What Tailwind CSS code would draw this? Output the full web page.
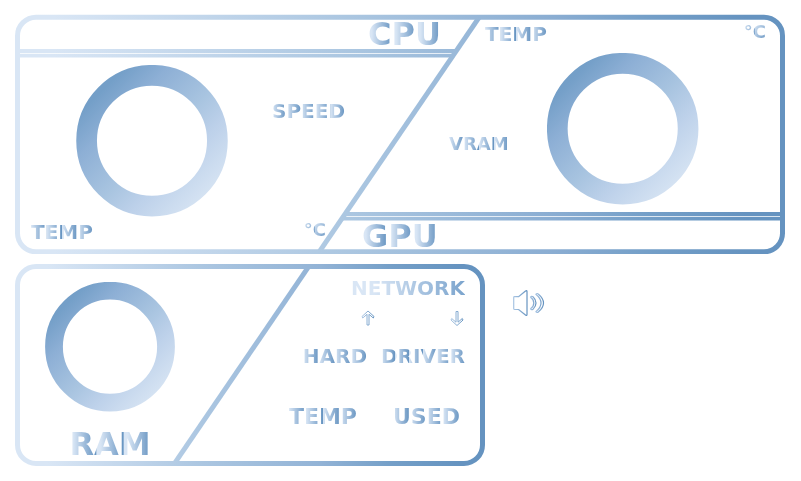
<!DOCTYPE html>
<html lang="en">
<head>
<meta charset="utf-8">
<meta name="viewport" content="width=device-width, initial-scale=1">
<title>System monitor</title>
<script src="https://cdn.jsdelivr.net/npm/@tailwindcss/browser@4"></script>
</head>
<body class="min-h-screen bg-white px-[15px] pt-[14px] font-['DejaVu_Sans',sans-serif] font-bold leading-none">
<svg class="absolute size-0" aria-hidden="true">
  <defs>
    <linearGradient id="ring" x1="0.02" y1="0.02" x2="0.98" y2="0.98">
      <stop offset="0" stop-color="#749fc8"/><stop offset=".1" stop-color="#749fc8"/><stop offset=".27" stop-color="#8dafd5"/><stop offset=".53" stop-color="#a8c4e0"/><stop offset=".7" stop-color="#bdd1ea"/><stop offset="1" stop-color="#dce8f5"/>
    </linearGradient>
    <linearGradient id="ink" x1="0" y1="0" x2="1" y2="0">
      <stop offset="0" stop-color="#a9c5e3"/><stop offset="1" stop-color="#6593c0"/>
    </linearGradient>
  </defs>
</svg>
<main class="flex flex-col gap-[10px]">
  <section class="grid max-w-[770px]" aria-label="CPU and GPU">
    <svg class="[grid-area:1/1] h-full w-full" viewBox="0 0 770 240" preserveAspectRatio="none" fill="none" stroke="url(#frameA)" aria-hidden="true">
      <defs><linearGradient id="frameA" gradientUnits="userSpaceOnUse" x1="0" y1="0" x2="770" y2="0"><stop offset=".05" stop-color="#d9e6f5"/><stop offset=".45" stop-color="#a9c5e0"/><stop offset=".7" stop-color="#8aadd2"/><stop offset=".82" stop-color="#749fc8"/><stop offset=".95" stop-color="#6593c0"/></linearGradient></defs>
      <rect x="2.5" y="3.2" width="765" height="234.6" rx="18.5" stroke-width="5"/>
      <path fill="url(#frameA)" stroke="none" d="M5 35H442L439.500 39.200H5ZM5 39.900H439L436.500 43.500H5ZM331 198H766V202.200H328.500ZM327.500 202.900H766V206.500H325.500Z"/>
      <path fill="url(#frameA)" stroke="none" d="M460 5H466L308.500 236H302.500Z"/>
    </svg>
    <div class="[grid-area:1/1]">
      <div class="grid h-[39px] grid-cols-[455fr_315fr] items-center">
        <h2 class="justify-self-end mr-[29px] bg-linear-to-r from-[#d9e6f5] from-15% to-[#6593c0] bg-[length:33.333%_100%] bg-clip-text text-[32px] text-transparent">CPU</h2>
        <div class="flex items-center justify-between pl-[15px] pr-[19px]">
          <span class="bg-linear-to-r from-[#d9e6f5] to-[#6593c0] bg-[length:25%_100%] bg-clip-text text-[20px] text-transparent">TEMP</span>
          <span class="mb-1 bg-linear-to-br from-[#d9e6f5] to-[#6593c0] bg-[length:50%_100%] bg-clip-text text-[18px] text-transparent">°C</span>
        </div>
      </div>
      <div class="grid grid-cols-[257fr_177fr_98fr_238fr] items-start">
        <svg class="ml-[61px] mt-3 size-[152px]" viewBox="0 0 152 152" role="img" aria-label="CPU load"><circle cx="76" cy="75.700" r="65.400" fill="none" stroke="url(#ring)" stroke-width="20.700"/></svg>
        <span class="mt-12 justify-self-start bg-linear-to-r from-[#d9e6f5] to-[#6593c0] bg-[length:20%_100%] bg-clip-text text-[20px] text-transparent">SPEED</span>
        <span class="mt-[82px] justify-self-start bg-linear-to-r from-[#d9e6f5] to-[#6593c0] bg-[length:25%_100%] bg-clip-text text-[18px] text-transparent">VRAM</span>
        <svg class="size-[152px]" viewBox="0 0 152 152" role="img" aria-label="GPU load"><circle cx="75.700" cy="75.700" r="65.400" fill="none" stroke="url(#ring)" stroke-width="20.700"/></svg>
      </div>
      <div class="grid h-[37px] grid-cols-[315fr_455fr] items-center">
        <div class="flex items-center justify-between pl-4 pr-1 pb-2">
          <span class="bg-linear-to-r from-[#d9e6f5] to-[#6593c0] bg-[length:25%_100%] bg-clip-text text-[20px] text-transparent">TEMP</span>
          <span class="mb-1 bg-linear-to-br from-[#d9e6f5] to-[#6593c0] bg-[length:50%_100%] bg-clip-text text-[18px] text-transparent">°C</span>
        </div>
        <h2 class="ml-8 justify-self-start bg-linear-to-r from-[#d9e6f5] from-15% to-[#6593c0] bg-[length:33.333%_100%] bg-clip-text text-[32px] text-transparent">GPU</h2>
      </div>
    </div>
  </section>

  <div class="flex items-start gap-7">
    <section class="grid w-full max-w-[470px]" aria-label="Memory, network and disk">
      <svg class="[grid-area:1/1] h-full w-full" viewBox="0 0 470 202" preserveAspectRatio="none" fill="none" stroke="url(#frameB)" aria-hidden="true">
        <defs><linearGradient id="frameB" gradientUnits="userSpaceOnUse" x1="0" y1="0" x2="470" y2="0"><stop offset=".07" stop-color="#d9e6f5"/><stop offset=".4" stop-color="#abc6e1"/><stop offset=".65" stop-color="#92b3d6"/><stop offset=".8" stop-color="#749fc8"/><stop offset=".95" stop-color="#6593c0"/></linearGradient></defs>
        <rect x="2.500" y="2.500" width="465" height="197" rx="18.500" stroke-width="5"/>
        <path fill="url(#frameB)" stroke="none" d="M289 5H295L163.500 198H157.500Z"/>
      </svg>
      <div class="[grid-area:1/1] grid h-[202px] grid-cols-[190fr_280fr]">
        <div class="flex flex-col items-center pt-[18px]">
          <svg class="size-[130px]" viewBox="0 0 130 130" role="img" aria-label="RAM load"><circle cx="65" cy="64.700" r="56" fill="none" stroke="url(#ring)" stroke-width="17.800"/></svg>
          <h2 class="mt-4 bg-linear-to-r from-[#d9e6f5] from-15% to-[#6593c0] bg-[length:33.333%_100%] bg-clip-text text-[32px] text-transparent">RAM</h2>
        </div>
        <div class="flex flex-col items-end pr-5 pt-[14px]">
          <h3 class="bg-linear-to-r from-[#d9e6f5] from-20% to-[#7ba4cd] bg-clip-text text-[20px] text-transparent">NETWORK</h3>
          <div class="mt-3 flex gap-[75px] pr-px">
            <svg class="h-4 w-[14px]" viewBox="0 0 14 16" fill="none" stroke="url(#ink)" stroke-width="1" role="img" aria-label="Upload"><path d="M7 1 13 6.500 12.300 8 8 4.300V15H6V4.300L1.700 8 1 6.500Z"/></svg>
            <svg class="h-4 w-[14px]" viewBox="0 0 14 16" fill="none" stroke="url(#ink)" stroke-width="1" role="img" aria-label="Download"><path d="M7 15.500 13 10 12.300 8.500 8 12.200V1.500H6V12.200L1.700 8.500 1 10Z"/></svg>
          </div>
          <h3 class="mt-5 flex gap-[14px] text-[20px]">
            <span class="bg-linear-to-r from-[#d9e6f5] to-[#6593c0] bg-[length:25%_100%] bg-clip-text text-transparent">HARD</span>
            <span class="bg-linear-to-r from-[#d9e6f5] to-[#6593c0] bg-[length:16.667%_100%] bg-clip-text text-transparent">DRIVER</span>
          </h3>
          <div class="mt-10 flex gap-9 pr-[5px] text-[22px]">
            <span class="bg-linear-to-r from-[#d9e6f5] to-[#6593c0] bg-[length:25%_100%] bg-clip-text text-transparent">TEMP</span>
            <span class="bg-linear-to-r from-[#d9e6f5] to-[#6593c0] bg-[length:25%_100%] bg-clip-text text-transparent">USED</span>
          </div>
        </div>
      </div>
    </section>
    <button type="button" aria-label="Volume" class="mt-[25px] shrink-0">
      <svg class="h-7 w-8" viewBox="0 0 32 28" fill="none" stroke="url(#ink)" stroke-width="1.2" stroke-linejoin="round" aria-hidden="true">
        <path d="M.7 8.500Q.7 7.700 1.500 7.700H5.500L12.500 2Q14 1 14 2.500V25.500Q14 27 12.500 26L5.500 20.500H1.500Q.7 20.500.7 19.500Z"/>
        <path d="M17.500 8.200Q18.500 6.700 20 7.800 23 10.700 23 14T20 20.200Q18.500 21.300 17.500 19.800 20.800 17.500 20.800 14T17.500 8.200Z"/>
        <path d="M22.800 5.300Q24 3.800 25.500 5.200 30.500 9.500 30.500 14T25.500 22.800Q24 24.200 22.800 22.700 28 18.500 28 14T22.800 5.300Z"/>
      </svg>
    </button>
  </div>
</main>
</body>
</html>
